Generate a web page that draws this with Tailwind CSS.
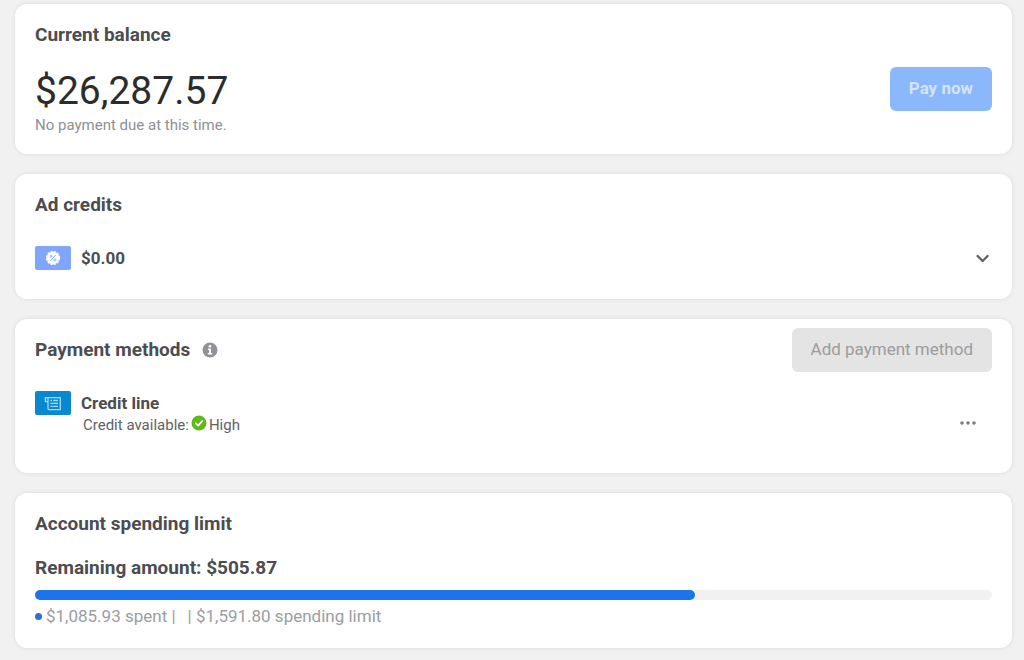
<!DOCTYPE html>
<html lang="en">
<head>
    <meta charset="UTF-8">
    <meta name="viewport" content="width=device-width, initial-scale=1.0">
    <title>Billing</title>
    <script src="https://cdn.jsdelivr.net/npm/@tailwindcss/browser@4"></script>
</head>
<body class="bg-[#f1f1f1] font-[Roboto,sans-serif] text-[#4b4d51] min-h-screen">
    <main class="flex flex-col gap-5 pt-1 pb-3 pl-[15px] pr-3">

        <!-- Current balance -->
        <section class="bg-white rounded-xl shadow-[0_0_4px_rgba(0,0,0,0.1)] px-5 pt-[19px] pb-[19px]">
            <h2 class="text-[19px] leading-6 font-bold">Current balance</h2>
            <div class="flex items-center justify-between mt-5">
                <div>
                    <p class="text-[39px] leading-12 text-[#2b2c2e]">$26,287.57</p>
                    <p class="text-[15px] leading-5 text-[#8e9094]">No payment due at this time.</p>
                </div>
                <button type="button" disabled class="h-11 px-[19px] mb-6 rounded-md bg-[#8ab8fa] text-[17px] font-bold text-[#d3e4fd]">Pay now</button>
            </div>
        </section>

        <!-- Ad credits -->
        <section class="bg-white rounded-xl shadow-[0_0_4px_rgba(0,0,0,0.1)] px-5 pt-[19px] pb-[29px]">
            <h2 class="text-[19px] leading-6 font-bold">Ad credits</h2>
            <div class="flex items-center mt-[29px]">
                <svg class="w-9 h-6" viewBox="0 0 36 24" aria-hidden="true">
                    <rect width="36" height="24" rx="2" fill="#80a6fb"/>
                    <circle cx="18" cy="12" r="6.2" fill="#fff"/>
                    <circle cx="18" cy="12" r="6.5" fill="none" stroke="#fff" stroke-width="1.2" stroke-dasharray="2.4 1"/>
                    <path d="M20.4 9.4l-4.8 5.2" stroke="#80a6fb" stroke-width="1" stroke-linecap="round"/>
                    <circle cx="16" cy="10.2" r="1" fill="none" stroke="#80a6fb" stroke-width="0.8"/>
                    <circle cx="20" cy="13.8" r="1" fill="none" stroke="#80a6fb" stroke-width="0.8"/>
                </svg>
                <span class="ml-[10px] text-[17px] leading-6 font-bold">$0.00</span>
                <button type="button" aria-label="Show ad credits" class="ml-auto p-[2px]">
                    <svg class="w-4 h-4" viewBox="0 0 16 16" fill="none" stroke="#606266" stroke-width="2.4" stroke-linecap="round" stroke-linejoin="round">
                        <path d="M3.6 6l5 5 5-5"/>
                    </svg>
                </button>
            </div>
        </section>

        <!-- Payment methods -->
        <section class="bg-white rounded-xl shadow-[0_0_4px_rgba(0,0,0,0.1)] px-5 pt-[9px] pb-[38px]">
            <div class="flex items-center justify-between">
                <div class="flex items-center">
                    <h2 class="text-[19px] leading-6 font-bold">Payment methods</h2>
                    <svg class="w-4 h-4 ml-3" viewBox="0 0 16 16" aria-hidden="true">
                        <circle cx="8" cy="8" r="7.5" fill="#909297"/>
                        <circle cx="8" cy="4.3" r="1.3" fill="#fff"/>
                        <path d="M6 6.6h3v4.4h1.2v1.4H5.8V11H7V8H6z" fill="#fff"/>
                    </svg>
                </div>
                <button type="button" disabled class="h-11 px-[19px] rounded-md bg-[#e4e4e4] text-[17px] text-[#9b9c9e]">Add payment method</button>
            </div>
            <div class="flex items-start mt-[19px]">
                <svg class="w-9 h-6" viewBox="0 0 36 24" aria-hidden="true">
                    <rect width="36" height="24" rx="2" fill="#0788cf"/>
                    <g fill="none" stroke="#a5daf5" stroke-width="1.3" stroke-linejoin="round">
                        <path d="M13 10.6h-2.6V6.6h14.9v12H14.2q-1.2 0-1.2-1.2V6.6"/>
                        <path d="M15.4 9.5h1.6M18.2 9.5h4.8M15.4 12.4h7.6M15.4 15.4h7.6"/>
                    </g>
                </svg>
                <div class="ml-[10px]">
                    <h3 class="text-[17px] leading-6 font-bold">Credit line</h3>
                    <p class="flex items-center pl-[2px] text-[15px] leading-5 text-[#5f6165]">
                        Credit available:
                        <svg class="w-4 h-4 mx-[2px] mb-1" viewBox="0 0 16 16" aria-hidden="true">
                            <circle cx="8" cy="8" r="7.5" fill="#5fb918"/>
                            <path d="M4.8 8.3l2.3 2.3 4.2-4.6" fill="none" stroke="#fff" stroke-width="1.8" stroke-linecap="round" stroke-linejoin="round"/>
                        </svg>
                        High
                    </p>
                </div>
                <button type="button" aria-label="More options" class="ml-auto mr-[14px] mt-6">
                    <svg class="w-5 h-4" viewBox="0 0 20 16" fill="#7d7f83">
                        <circle cx="4" cy="8" r="1.8"/>
                        <circle cx="10" cy="8" r="1.8"/>
                        <circle cx="16" cy="8" r="1.8"/>
                    </svg>
                </button>
            </div>
        </section>

        <!-- Account spending limit -->
        <section class="bg-white rounded-xl shadow-[0_0_4px_rgba(0,0,0,0.1)] px-5 pt-[19px] pb-5">
            <h2 class="text-[19px] leading-6 font-bold">Account spending limit</h2>
            <p class="mt-5 text-[19px] leading-6 font-bold">Remaining amount: $505.87</p>
            <div class="mt-[10px] h-[10px] rounded-full bg-[#f1f1f1]">
                <div class="h-full rounded-full bg-[#1b74ea]" style="width: 69%"></div>
            </div>
            <p class="flex items-center mt-1 text-[17px] leading-6 text-[#9b9da1]">
                <span class="w-[7px] h-[7px] mr-1 rounded-full bg-[#2d70cf]"></span>
                <span>$1,085.93 spent |</span>
                <span class="ml-3">| $1,591.80 spending limit</span>
            </p>
        </section>

    </main>
</body>
</html>
